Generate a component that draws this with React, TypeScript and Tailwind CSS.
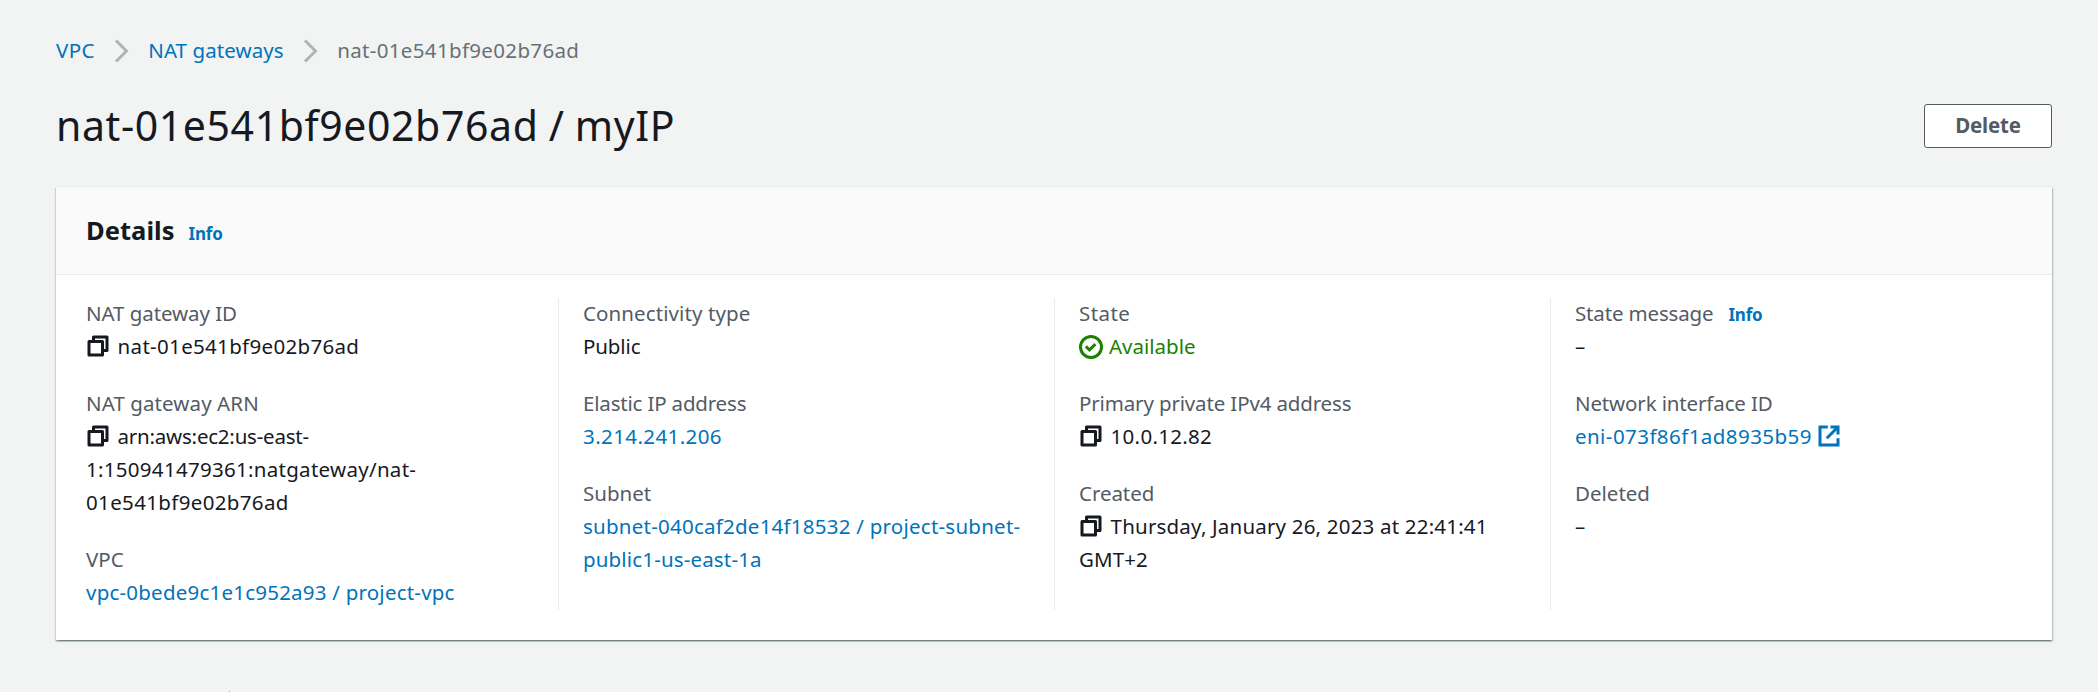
import React from "react";

function CopyIcon() {
  return (
    <svg viewBox="0 0 16 16" className="mr-[7.6px] mb-px h-6 w-6 shrink-0" fill="none" stroke="#16191f" strokeWidth="2" strokeLinejoin="round">
      <path d="M2 5h9v9H2z" />
      <path d="M5 5V2h9v9h-3" />
    </svg>
  );
}

function SuccessIcon() {
  return (
    <svg viewBox="0 0 16 16" className="mr-1.5 h-6 w-6 shrink-0" fill="none" stroke="#1d8102" strokeWidth="2">
      <circle cx="8" cy="8" r="7" />
      <path d="m4.6 7.6 2.4 2.4 3.9-3.9" />
    </svg>
  );
}

function ExternalIcon() {
  return (
    <svg viewBox="0 0 16 16" className="mb-px ml-[5px] h-6 w-6 shrink-0" fill="none" stroke="#0073bb" strokeWidth="2">
      <path d="M7.2 2H2v12h12V9.5" />
      <path d="M9 2h5v5" />
      <path d="m6.5 9.5 7.3-7.3" />
    </svg>
  );
}

function Chevron() {
  return (
    <svg viewBox="0 0 16 16" className="mr-[14.5px] ml-[15px] h-6 w-6 shrink-0" fill="none" stroke="#aab7b8" strokeWidth="2">
      <path d="m4 1 7 7-7 7" />
    </svg>
  );
}

type Line = { text: string; track?: string };
type FieldProps = {
  label: string;
  labelTrack?: string;
  info?: boolean;
  icon?: React.ReactNode;
  trailing?: React.ReactNode;
  tone?: string;
  lines: Line[];
};

function Field({ label, labelTrack = "", info, icon, trailing, tone = "text-[#16191f]", lines }: FieldProps) {
  return (
    <div>
      <div className="flex h-[33px] items-baseline text-[#545b64]">
        <span className={labelTrack}>{label}</span>
        {info && (
          <a className="ml-[15px] text-[17px] font-bold tracking-[-0.2px] text-[#0073bb]">Info</a>
        )}
      </div>
      {lines.map((line, i) => (
        <div key={line.text} className={`flex h-[33px] items-center ${tone}`}>
          {i === 0 && icon}
          <span className={line.track ?? ""}>{line.text}</span>
          {i === 0 && trailing}
        </div>
      ))}
    </div>
  );
}

function Column({ first, children }: { first?: boolean; children: React.ReactNode }) {
  return (
    <div className={first ? "h-[312px] w-[502px] pl-[30px]" : "h-[312px] w-[496px] border-l border-[#eaeded] pl-6"}>
      <div className="-mt-px flex flex-col gap-6">{children}</div>
    </div>
  );
}

const link = "text-[#0073bb]";

export default function App() {
  return (
    <div className="flex h-[692px] w-[2098px] flex-col overflow-hidden bg-[#f2f3f3] px-[56px] pt-[34px] pr-[46px] font-['Noto_Sans',sans-serif] text-[20.5px] leading-[33px] whitespace-nowrap text-[#16191f]">
      <nav className="flex h-[33px] items-center">
        <a className="tracking-[0.35px] text-[#0073bb]">VPC</a>
        <Chevron />
        <a className="tracking-[0.08px] text-[#0073bb]">NAT gateways</a>
        <Chevron />
        <span className="tracking-[0.34px] text-[#687078]">nat-01e541bf9e02b76ad</span>
      </nav>

      <div className="mt-[30px] flex h-[54px] items-start justify-between">
        <h1 className="mt-px text-[41px] leading-[54px] tracking-[0.6px] [word-spacing:-1px]">nat-01e541bf9e02b76ad / myIP</h1>
        <button className="mt-[7px] flex h-11 w-32 items-center justify-center rounded-[3px] border border-[#545b64] bg-white pb-0.5 font-bold tracking-[-0.2px] text-[#545b64]">
          Delete
        </button>
      </div>

      <section className="mt-[35px] h-[454px] bg-white shadow-[0_1.5px_1.5px_0_rgba(0,28,36,0.35),1.5px_1.5px_1.5px_0_rgba(0,28,36,0.15),-1.5px_1.5px_1.5px_0_rgba(0,28,36,0.15)]">
        <header className="flex h-[89px] items-center border-y border-[#eaeded] bg-[#fafafa] pt-0.5 pl-[30px]">
          <div className="flex items-baseline">
            <h2 className="text-[25.5px] font-bold tracking-[0.05px]">Details</h2>
            <a className="ml-[14px] text-[17px] font-bold tracking-[-0.2px] text-[#0073bb]">Info</a>
          </div>
        </header>
        <div className="flex pt-[23px]">
          <Column first>
            <Field
              label="NAT gateway ID"
              labelTrack="tracking-[-0.07px]"
              icon={<CopyIcon />}
              lines={[{ text: "nat-01e541bf9e02b76ad", track: "tracking-[0.32px]" }]}
            />
            <Field
              label="NAT gateway ARN"
              labelTrack="tracking-[0.09px]"
              icon={<CopyIcon />}
              lines={[
                { text: "arn:aws:ec2:us-east-", track: "tracking-[-0.22px]" },
                { text: "1:150941479361:natgateway/nat-", track: "tracking-[0.29px]" },
                { text: "01e541bf9e02b76ad", track: "tracking-[0.35px]" },
              ]}
            />
            <Field
              label="VPC"
              tone={link}
              lines={[{ text: "vpc-0bede9c1e1c952a93 / project-vpc", track: "tracking-[0.22px]" }]}
            />
          </Column>
          <Column>
            <Field
              label="Connectivity type"
              labelTrack="tracking-[0.1px]"
              lines={[{ text: "Public", track: "tracking-[-0.11px]" }]}
            />
            <Field
              label="Elastic IP address"
              labelTrack="tracking-[-0.18px]"
              tone={link}
              lines={[{ text: "3.214.241.206", track: "tracking-[0.4px]" }]}
            />
            <Field
              label="Subnet"
              tone={link}
              lines={[
                { text: "subnet-040caf2de14f18532 / project-subnet-", track: "tracking-[0.24px]" },
                { text: "public1-us-east-1a", track: "tracking-[0.16px]" },
              ]}
            />
          </Column>
          <Column>
            <Field
              label="State"
              labelTrack="tracking-[0.44px]"
              tone="text-[#1d8102]"
              icon={<SuccessIcon />}
              lines={[{ text: "Available" }]}
            />
            <Field
              label="Primary private IPv4 address"
              labelTrack="tracking-[-0.145px]"
              icon={<CopyIcon />}
              lines={[{ text: "10.0.12.82", track: "tracking-[0.28px]" }]}
            />
            <Field
              label="Created"
              labelTrack="tracking-[-0.05px]"
              icon={<CopyIcon />}
              lines={[
                { text: "Thursday, January 26, 2023 at 22:41:41", track: "tracking-[0.19px]" },
                { text: "GMT+2", track: "tracking-[0.09px]" },
              ]}
            />
          </Column>
          <Column>
            <Field label="State message" labelTrack="tracking-[-0.16px]" info lines={[{ text: "–" }]} />
            <Field
              label="Network interface ID"
              labelTrack="tracking-[-0.14px]"
              tone={link}
              trailing={<ExternalIcon />}
              lines={[{ text: "eni-073f86f1ad8935b59", track: "tracking-[0.44px]" }]}
            />
            <Field label="Deleted" lines={[{ text: "–" }]} />
          </Column>
        </div>
      </section>

      <div className="mt-[51px] ml-[173px] h-px w-px shrink-0 bg-[#9a9fa3]" />
    </div>
  );
}
